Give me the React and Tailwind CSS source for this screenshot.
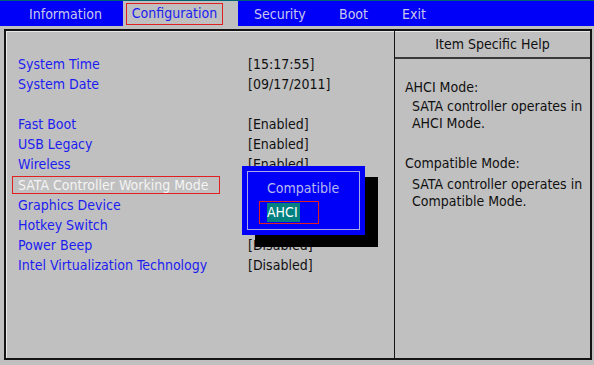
import React from 'react';

const font = { fontFamily: '"DejaVu Sans Condensed", "DejaVu Sans", "Liberation Sans", sans-serif' };

const tabs = [
  { name: 'Information', left: 'w-[123px] pl-[29px]' },
  { name: 'Configuration', active: true },
  { name: 'Security', left: 'w-[101px] pl-[16px]' },
  { name: 'Boot', left: 'w-[63px]' },
  { name: 'Exit', left: 'w-[60px]' },
];

// values hidden under the popup are left empty
const rows = [
  { label: 'System Time', value: '[15:17:55]' },
  { label: 'System Date', value: '[09/17/2011]' },
  null,
  { label: 'Fast Boot', value: '[Enabled]' },
  { label: 'USB Legacy', value: '[Enabled]' },
  { label: 'Wireless', value: '[Enabled]' },
  { label: 'SATA Controller Working Mode', value: '', selected: true },
  { label: 'Graphics Device', value: '' },
  { label: 'Hotkey Switch', value: '' },
  { label: 'Power Beep', value: '[Disabled]' },
  { label: 'Intel Virtualization Technology', value: '[Disabled]' },
];

const SettingRow = ({ row }) => {
  if (!row) return <div className="h-[20px]" />;
  return (
    <div className="flex h-[20.2px] items-center">
      <div className="w-[242px] pl-[12px]">
        {row.selected ? (
          <span className="-ml-[6px] block h-[18px] w-[208px] border border-[#e02020] pl-[5px] leading-[16px] text-[#f4f4f4]">
            {row.label}
          </span>
        ) : (
          <span className="text-[#1c1cf0]">{row.label}</span>
        )}
      </div>
      <span className="text-[#101010]">{row.value}</span>
    </div>
  );
};

// value picker that pops over the list
const OptionPopup = () => (
  <div className="absolute left-[242px] top-[166px]">
    <div className="absolute left-[13px] top-[11px] h-[70px] w-[123px] bg-black" />
    <div className="relative h-[69px] w-[123px] bg-[#0000f8] p-[5px]">
      <div className="h-full w-full border border-[#a8a8e8] pl-[19px] pt-[6px]">
        <div className="leading-[20px] text-[#b8b8f0]">Compatible</div>
        <div className="-ml-[8px] mt-[3px] flex h-[23px] w-[60px] items-center border border-[#e02020] pl-[7px]">
          <span className="bg-[#008080] pr-[2px] leading-[19px] text-white">AHCI</span>
        </div>
      </div>
    </div>
  </div>
);

export default function App() {
  return (
    <div className="relative h-[365px] w-[594px] overflow-hidden bg-[#c0c0c0] text-[14px]" style={font}>
      {/* Top menu */}
      <div className="flex h-[26px] items-stretch border-t border-[#006070] bg-[#0000f8]">
        {tabs.map((t) =>
          t.active ? (
            <div key={t.name} className="flex w-[115px] items-center bg-[#c0c0c0] pl-[3px]">
              <div className="flex h-[22px] w-[97px] items-center justify-center border border-[#e02020] text-[#1c1cf0]">
                {t.name}
              </div>
            </div>
          ) : (
            <div key={t.name} className={`flex items-center pt-[1px] text-[#c8c8ec] ${t.left}`}>
              {t.name}
            </div>
          )
        )}
      </div>

      {/* Main panel */}
      <div className="ml-[4px] mt-[3px] flex h-[331px] w-[588px] border-2 border-[#141414] shadow-[inset_1px_1px_0_#e8e8e8]">
        <div className="w-[389px] border-r border-[#141414] pt-[23px]">
          {rows.map((r, i) => (
            <SettingRow key={i} row={r} />
          ))}
        </div>
        <div className="flex-1">
          <div className="flex h-[28px] items-center justify-center border-b-2 border-[#3a3a3a] text-[#101010]">
            Item Specific Help
          </div>
          <div className="pl-[10px] pt-[20px] leading-[17px] text-[#101010]">
            <div>AHCI Mode:</div>
            <div className="mt-[2px] pl-[7px]">SATA controller operates in</div>
            <div className="pl-[7px]">AHCI Mode.</div>
            <div className="mt-[23px]">Compatible Mode:</div>
            <div className="mt-[4px] pl-[7px]">SATA controller operates in</div>
            <div className="pl-[7px]">Compatible Mode.</div>
          </div>
        </div>
      </div>

      <OptionPopup />
    </div>
  );
}
